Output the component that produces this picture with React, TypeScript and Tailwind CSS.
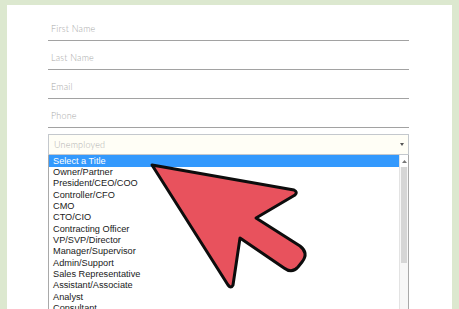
import React from 'react';

const fields = ["First Name", "Last Name", "Email", "Phone"];

const titles = [
  "Owner/Partner",
  "President/CEO/COO",
  "Controller/CFO",
  "CMO",
  "CTO/CIO",
  "Contracting Officer",
  "VP/SVP/Director",
  "Manager/Supervisor",
  "Admin/Support",
  "Sales Representative",
  "Assistant/Associate",
  "Analyst",
  "Consultant",
];

const Arrow = () => (
  <svg className="absolute left-0 top-0 pointer-events-none" width="459" height="309" viewBox="0 0 459 309">
    <path
      d="M152 165 L294 190 Q298 192 295 195 L256 218 L300 246 Q309 253 302 262 L298 267 Q292 274 284 268 L240 238 L233 285 Q231 289 228 285 Z"
      fill="#e8525d"
      stroke="#0d0d0d"
      strokeWidth="3"
      strokeLinejoin="round"
    />
  </svg>
);

export default function App() {
  return (
    <div className="relative w-[459px] h-[309px] overflow-hidden bg-[#dce8cf] pt-[5px] px-[7px]">
      <div className="h-full bg-white pt-[7px] pl-[41px] pr-[43px] font-['Lato',sans-serif]">
        {fields.map((f) => (
          <div key={f} className="h-[29px] border-b border-[#a2a2a2] flex items-end pb-[5px] pl-[3px] text-[9px] font-light text-[#a8a8a8] leading-[12px] tracking-[0.2px]">
            {f}
          </div>
        ))}

        <div className="mt-[6px] h-[21px] border border-[#c4c8cd] bg-[#fffef6] flex items-center justify-between pl-[5px] pr-[4px] text-[9px] font-light text-[#b0b0b0] tracking-[0.2px]">
          <span>Unemployed</span>
          <svg width="4" height="3" viewBox="0 0 4 3">
            <path d="M0 0 L4 0 L2 3 Z" fill="#555" />
          </svg>
        </div>

        <div className="flex border-x border-[#a9a9a9] font-['Liberation_Sans',sans-serif] text-[9.2px] text-[#1a1a1a]">
          <div className="flex-1 flex flex-col">
            <div className="h-[12px] bg-[#3399fd] text-white pl-[4px] leading-[12px]">Select a Title</div>
            {titles.map((t) => (
              <div key={t} className="h-[11.35px] pl-[4px] leading-[11.35px] whitespace-nowrap">
                {t}
              </div>
            ))}
          </div>
          <div className="w-[9px] border-l border-[#e3e3e3] bg-[#f7f7f7] flex flex-col items-center">
            <div className="h-[12px] w-full bg-white flex items-center justify-center">
              <svg width="5" height="3" viewBox="0 0 5 3">
                <path d="M0 3 L5 3 L2.5 0 Z" fill="#777" />
              </svg>
            </div>
            <div className="w-[6px] h-[96px] bg-[#d6d6d6]" />
          </div>
        </div>
      </div>
      <Arrow />
    </div>
  );
}
